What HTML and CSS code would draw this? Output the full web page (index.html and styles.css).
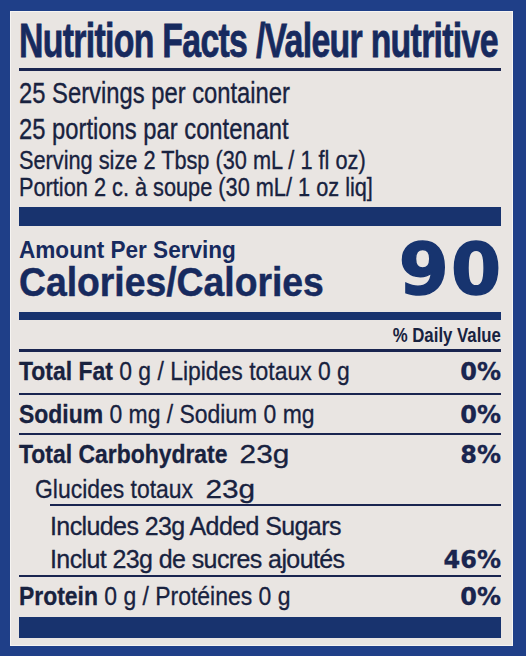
FILE: index.html
```html
<!DOCTYPE html>
<html lang="en">
<head>
    <meta charset="UTF-8">
    <meta name="viewport" content="width=device-width, initial-scale=1.0">
    <title>Nutrition Facts</title>
    <link rel="stylesheet" href="styles.css">
</head>
<body>
    <div class="label">
        <h1 class="title">Nutrition Facts /Valeur nutritive</h1>

        <div class="servings">
            <p class="servings-count">25 Servings per container</p>
            <p class="servings-count second">25 portions par contenant</p>
            <p class="serving-size">Serving size 2 Tbsp (30 mL / 1 fl oz)</p>
            <p class="serving-size">Portion 2 c. à soupe (30 mL/ 1 oz liq]</p>
        </div>

        <div class="bar bar-thick"></div>

        <div class="calories">
            <div class="calories-text">
                <p class="amount">Amount Per Serving</p>
                <p class="calories-label">Calories/Calories</p>
            </div>
            <span class="calories-value">90</span>
        </div>

        <div class="bar bar-medium"></div>

        <div class="dv-head">
            <span>% Daily Value</span>
        </div>

        <div class="row row-fat">
            <span class="name"><b>Total Fat</b> 0 g / Lipides totaux 0 g</span>
            <span class="dv">0%</span>
        </div>

        <div class="row row-sodium">
            <span class="name"><b>Sodium</b> 0 mg / Sodium 0 mg</span>
            <span class="dv">0%</span>
        </div>

        <div class="row row-carb">
            <div class="line">
                <span class="name"><b>Total Carbohydrate</b><span class="wide">23g</span></span>
                <span class="dv">8%</span>
            </div>
            <div class="line sub">
                <span class="name">Glucides totaux<span class="wide">23g</span></span>
            </div>
        </div>

        <div class="row row-sugar">
            <div class="line">
                <span>Includes 23g Added Sugars</span>
            </div>
            <div class="line second">
                <span>Inclut 23g de sucres ajoutés</span>
                <span class="dv">46%</span>
            </div>
        </div>

        <div class="row row-protein">
            <span class="name"><b>Protein</b> 0 g / Protéines 0 g</span>
            <span class="dv">0%</span>
        </div>

        <div class="bar bar-bottom"></div>
    </div>
</body>
</html>
```

FILE: styles.css
```css
* {
    margin: 0;
    padding: 0;
    box-sizing: border-box;
}

body {
    background-color: #1f3f88;
    font-family: 'Liberation Sans', Arial, sans-serif;
    color: #18223f;
}

.label {
    height: 635px;
    margin: 11px 13px 10px 10px;
    padding: 5px 11px 0 8px;
    background-color: #e9e5e2;
    border: 1px solid #f6f4f2;
    overflow: hidden;
}

/* the label type is a condensed grotesque: squeeze Liberation Sans to fit */
.title,
.servings p,
.amount,
.calories-label,
.name {
    white-space: nowrap;
    transform-origin: left center;
}

.title {
    font-size: 48px;
    line-height: 48px;
    font-weight: 700;
    letter-spacing: -1px;
    color: #172a5e;
    -webkit-text-stroke: 0.8px #172a5e;
    transform: scaleX(0.705);
}

.servings {
    border-top: 3px solid #1a2550;
    margin-top: 3px;
    padding-top: 3px;
    -webkit-text-stroke: 0.35px #18223f;
}

.servings-count {
    font-size: 29px;
    line-height: 38px;
    transform: scaleX(0.82);
}

.servings-count.second {
    line-height: 35px;
}

.serving-size {
    font-size: 26.5px;
    line-height: 27px;
    transform: scaleX(0.82);
}

.bar {
    background-color: #18336e;
}

.bar-thick {
    height: 19px;
    margin-top: 6px;
}

.calories {
    display: flex;
    justify-content: space-between;
    align-items: flex-end;
    height: 86px;
}

.calories-text {
    padding-bottom: 8px;
}

.amount {
    font-size: 24px;
    line-height: 24px;
    margin-bottom: -2px;
    font-weight: 700;
    color: #172a5e;
    transform: scaleX(0.94);
}

.calories-label {
    font-size: 41px;
    line-height: 44px;
    font-weight: 700;
    color: #172a5e;
    -webkit-text-stroke: 0.5px #172a5e;
    transform: scaleX(0.91);
}

.calories-value {
    font-family: 'DejaVu Sans', sans-serif;
    font-size: 72px;
    line-height: 60px;
    font-weight: 700;
    letter-spacing: 2px;
    margin-right: -2px;
    margin-bottom: 13px;
    color: #17346f;
    -webkit-text-stroke: 1.5px #17346f;
}

.bar-medium {
    height: 8px;
}

.dv-head {
    height: 32px;
    padding-top: 2px;
    font-size: 20px;
    line-height: 27px;
    font-weight: 700;
    text-align: right;
    border-bottom: 3px solid #1a2550;
}

.dv-head span {
    display: inline-block;
    white-space: nowrap;
    transform: scaleX(0.84);
    transform-origin: right center;
}

.row {
    font-size: 26.5px;
    line-height: 30px;
    -webkit-text-stroke: 0.3px #18223f;
}

.row,
.row .line {
    display: flex;
    justify-content: space-between;
    align-items: baseline;
}

.row-carb,
.row-sugar {
    flex-direction: column;
    align-items: stretch;
}

.name {
    display: inline-block;
    transform: scaleX(0.865);
}

.wide {
    display: inline-block;
    margin-left: 14px;
    transform: scaleX(1.3);
    transform-origin: left center;
}

.row-fat {
    height: 43px;
    padding-top: 4px;
    border-bottom: 2px solid #1a2550;
}

.row-sodium {
    height: 40px;
    padding-top: 4px;
    border-bottom: 2px solid #1a2550;
}

.row-carb {
    height: 69px;
    padding-top: 4px;
}

.row-carb .sub {
    margin-top: 4px;
    padding-left: 16px;
}

.row-sugar {
    height: 71px;
    margin-left: 31px;
    padding-top: 5px;
    border-top: 2px solid #1a2550;
    font-size: 25px;
    letter-spacing: -0.6px;
}

.row-sugar .second {
    margin-top: -2px;
}

.row-protein {
    height: 42px;
    padding-top: 4px;
    border-top: 2px solid #1a2550;
}

.dv {
    font-family: 'DejaVu Sans', sans-serif;
    font-size: 24px;
    font-weight: 700;
    letter-spacing: 0;
    color: #1a2550;
}

.bar-bottom {
    height: 21px;
}
```
